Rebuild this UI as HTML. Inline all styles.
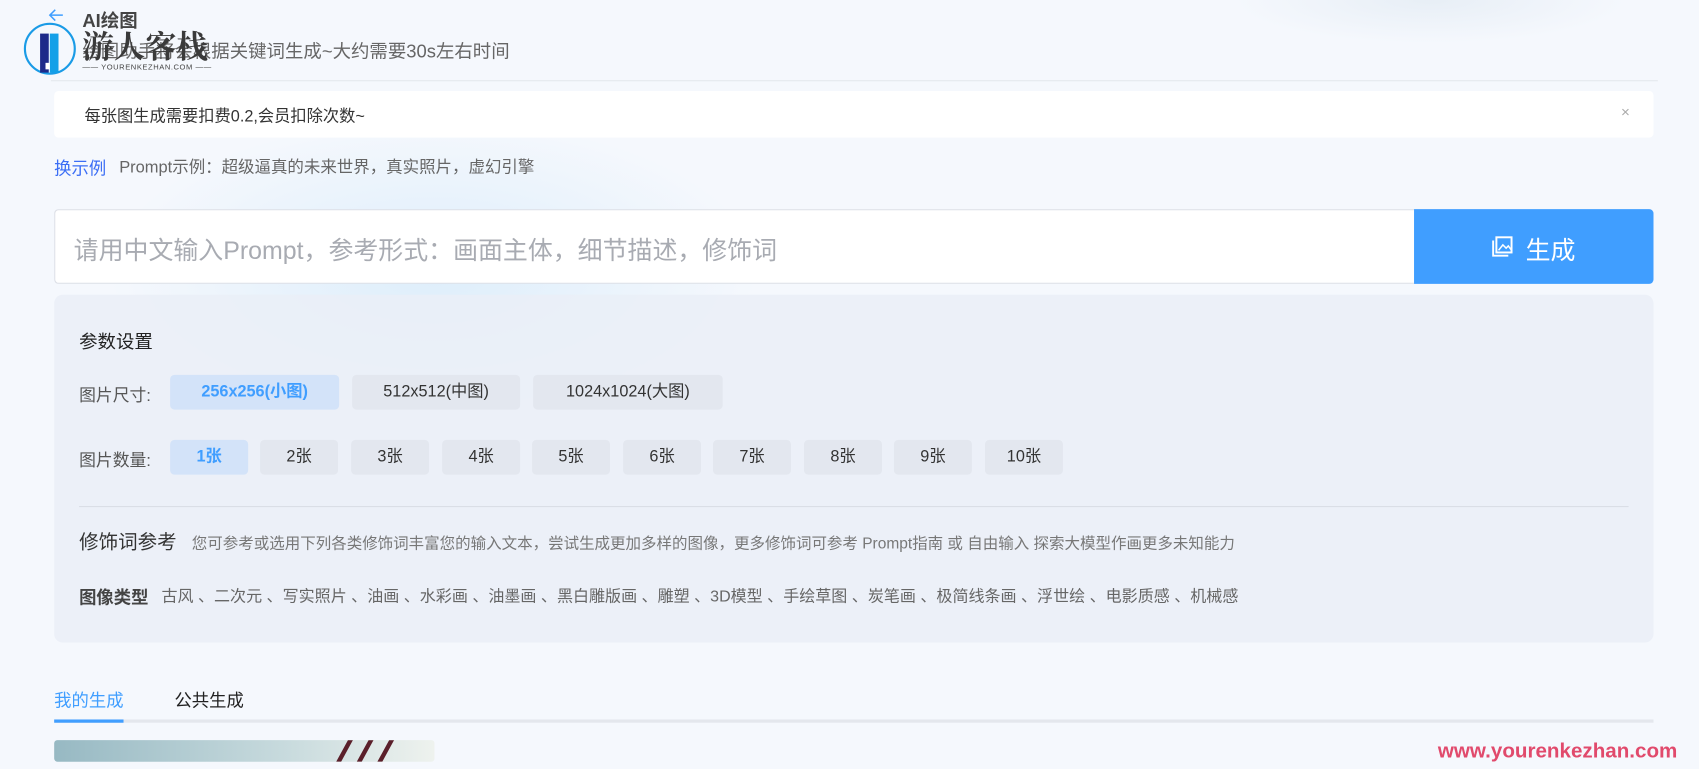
<!DOCTYPE html>
<html><head><meta charset="utf-8"><style>
html,body{margin:0;padding:0;width:1699px;height:769px;overflow:hidden;background:#f5f8fd}
#w{position:absolute;left:0;top:0;width:1568px;height:710px;transform:scale(1.08355);transform-origin:0 0;font-family:"Liberation Sans","Noto Sans CJK SC",sans-serif;color:#333;
background:radial-gradient(ellipse 300px 140px at 400px 250px,rgba(215,235,250,.8),transparent),radial-gradient(ellipse 180px 40px at 1320px 0,rgba(228,236,244,.8),transparent),#f5f8fd}
.a{position:absolute;white-space:nowrap}
.b{position:absolute;height:32px;line-height:32px;text-align:center;background:#e3e7ef;border-radius:4px;font-size:15px;color:#333}
.b.on{background:#d3e3f9;color:#409eff;font-weight:bold}
.n{width:72px;top:406px}
</style></head><body><div id="w">
<svg class="a" style="left:44px;top:6px" width="16" height="16" viewBox="0 0 16 16"><path d="M14 8H2M7 3L2 8l5 5" fill="none" stroke="#409eff" stroke-width="1.4"/></svg>
<div class="a" style="left:76px;top:5px;font-size:17px;font-weight:bold;color:#444">AI绘图</div>
<div class="a" style="left:76px;top:33px;font-size:17px;color:#666">绘图助手将会根据关键词生成~大约需要30s左右时间</div>
<svg class="a" style="left:21px;top:20px" width="50" height="50" viewBox="0 0 50 50"><circle cx="25" cy="25" r="23" fill="none" stroke="#1a9be6" stroke-width="2"/><rect x="16" y="11" width="8" height="36" fill="#1d2a8a"/><rect x="25" y="11" width="8" height="36" fill="#14a0e8"/><rect x="21" y="38" width="4" height="6" fill="#fff"/></svg>
<div class="a" style="left:76px;top:21px;font-size:29px;font-weight:bold;color:#3a3a3a;font-family:'Noto Serif CJK SC',serif">游人客栈</div>
<div class="a" style="left:76px;top:59px;font-size:7px;color:#444;letter-spacing:.5px">—— YOURENKEZHAN.COM ——</div>
<div class="a" style="left:47px;top:74px;width:1483px;height:1px;background:#e4e8ee"></div>
<div class="a" style="left:50px;top:84px;width:1476px;height:43px;background:#fff;border-radius:4px"></div>
<div class="a" style="left:78px;top:96px;font-size:15px;color:#333">每张图生成需要扣费0.2,会员扣除次数~</div>
<div class="a" style="left:1496px;top:95px;font-size:14px;color:#aaa">×</div>
<div class="a" style="left:50px;top:142px;font-size:16px;color:#3b6ef5">换示例</div>
<div class="a" style="left:110px;top:142px;font-size:15.2px;color:#666">Prompt示例：超级逼真的未来世界，真实照片，虚幻引擎</div>
<div class="a" style="left:50px;top:193px;width:1254px;height:67px;background:#fff;border:1px solid #dcdfe6;border-right:none;border-radius:4px 0 0 4px"></div>
<div class="a" style="left:68px;top:212px;font-size:23px;color:#a8abb2">请用中文输入Prompt，参考形式：画面主体，细节描述，修饰词</div>
<div class="a" style="left:1305px;top:193px;width:221px;height:69px;background:#409eff;border-radius:0 4px 4px 0"></div>
<svg class="a" style="left:1377px;top:217px" width="20" height="20" viewBox="0 0 20 20"><rect x="4" y="2" width="14" height="14" fill="none" stroke="#fff" stroke-width="1.8"/><path d="M1 5v14h14" fill="none" stroke="#fff" stroke-width="1.8"/><path d="M6 14l4-5 3 3 2-2 3 4" fill="none" stroke="#fff" stroke-width="1.4"/></svg>
<div class="a" style="left:1408px;top:212px;font-size:23px;color:#fff">生成</div>
<div class="a" style="left:50px;top:272px;width:1476px;height:321px;background:rgba(234,238,247,.85);border-radius:8px"></div>
<div class="a" style="left:73px;top:301px;font-size:17px;color:#222">参数设置</div>
<div class="a" style="left:73px;top:353px;font-size:15.5px;color:#555">图片尺寸:</div>
<div class="b on" style="left:157px;top:346px;width:156px">256x256(小图)</div>
<div class="b" style="left:325px;top:346px;width:155px">512x512(中图)</div>
<div class="b" style="left:492px;top:346px;width:175px">1024x1024(大图)</div>
<div class="a" style="left:73px;top:413px;font-size:15.5px;color:#555">图片数量:</div>
<div class="b n on" style="left:157px">1张</div>
<div class="b n" style="left:240px">2张</div>
<div class="b n" style="left:324px">3张</div>
<div class="b n" style="left:408px">4张</div>
<div class="b n" style="left:491px">5张</div>
<div class="b n" style="left:575px">6张</div>
<div class="b n" style="left:658px">7张</div>
<div class="b n" style="left:742px">8张</div>
<div class="b n" style="left:825px">9张</div>
<div class="b n" style="left:909px">10张</div>
<div class="a" style="left:73px;top:467px;width:1430px;height:1px;background:#d9dde6"></div>
<div class="a" style="left:73px;top:486px;font-size:18px;color:#333">修饰词参考</div>
<div class="a" style="left:177px;top:490px;font-size:14.3px;color:#777">您可参考或选用下列各类修饰词丰富您的输入文本，尝试生成更加多样的图像，更多修饰词可参考 Prompt指南 或 自由输入 探索大模型作画更多未知能力</div>
<div class="a" style="left:73px;top:538px;font-size:16px;font-weight:bold;color:#444">图像类型</div>
<div class="a" style="left:149px;top:539px;font-size:14.8px;color:#666">古风 、二次元 、写实照片 、油画 、水彩画 、油墨画 、黑白雕版画 、雕塑 、3D模型 、手绘草图 、炭笔画 、极简线条画 、浮世绘 、电影质感 、机械感</div>
<div class="a" style="left:50px;top:633px;font-size:16px;color:#409eff">我的生成</div>
<div class="a" style="left:161px;top:633px;font-size:16px;color:#222">公共生成</div>
<div class="a" style="left:50px;top:664px;width:1476px;height:3px;background:#e4e7ed"></div>
<div class="a" style="left:50px;top:664px;width:64px;height:3px;background:#409eff"></div>
<div class="a" style="left:50px;top:683px;width:351px;height:20px;background:linear-gradient(90deg,#97b9c3,#c7dadd 60%,#eef2ee);border-radius:3px;overflow:hidden"><svg width="351" height="20"><path d="M262 21l12-22M281 21l12-22M300 21l12-22" stroke="#5a1f2a" stroke-width="4"/></svg></div>
<div class="a" style="left:1327px;top:683px;font-size:19px;font-weight:bold;color:#e14a6c">www.yourenkezhan.com</div>
</div></body></html>
